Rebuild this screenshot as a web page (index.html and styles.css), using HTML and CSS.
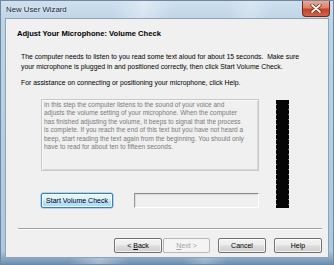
FILE: index.html
```html
<!DOCTYPE html>
<html>
<head>
<meta charset="utf-8">
<link rel="stylesheet" href="styles.css">
</head>
<body>
<div class="window">
  <div class="titlebar">
    <span class="title">New User Wizard</span>
    <span class="close"><svg width="12" height="9" viewBox="0 0 12 9"><path d="M2 1 L10 8 M10 1 L2 8" stroke="#6b2216" stroke-width="3.2" stroke-linecap="round"/><path d="M2 1 L10 8 M10 1 L2 8" stroke="#fff" stroke-width="1.7" stroke-linecap="round"/></svg></span>
  </div>
  <div class="client">
    <div class="heading">Adjust Your Microphone: Volume Check</div>
    <p class="para">The computer needs to listen to you read some text aloud for about 15 seconds.&nbsp; Make sure<br>your microphone is plugged in and positioned correctly, then click Start Volume Check.</p>
    <p class="para p2">For assistance on connecting or positioning your microphone, click Help.</p>
    <div class="meter-grid">
      <div class="readtext">In this step the computer listens to the sound of your voice and<br>adjusts the volume setting of your microphone. When the computer<br>has finished adjusting the volume, it beeps to signal that the process<br>is complete. If you reach the end of this text but you have not heard a<br>beep, start reading the text again from the beginning. You should only<br>have to read for about ten to fifteen seconds.</div>
      <div class="volbar"></div>
      <button class="btn btn-default start">Start Volume Check</button>
      <div class="progress"></div>
    </div>
    <div class="separator"></div>
    <div class="nav">
      <button class="btn nav-btn">&lt; <u>B</u>ack</button>
      <button class="btn nav-btn disabled"><u>N</u>ext &gt;</button>
      <button class="btn nav-btn gap">Cancel</button>
      <button class="btn nav-btn gap">Help</button>
    </div>
  </div>
</div>
</body>
</html>
```

FILE: styles.css
```css
html, body {
  margin: 0;
  padding: 0;
}
body {
  width: 334px;
  height: 265px;
  overflow: hidden;
  font-family: "Liberation Sans", Arial, sans-serif;
}
.window {
  box-sizing: border-box;
  width: 334px;
  height: 265px;
  display: flex;
  flex-direction: column;
  padding: 0 4px 6px 4px;
  background:
    linear-gradient(100deg, rgba(255,255,255,0) 30%, rgba(255,255,255,0.35) 38%, rgba(255,255,255,0) 46%, rgba(255,255,255,0) 60%, rgba(255,255,255,0.25) 66%, rgba(255,255,255,0) 72%),
    linear-gradient(180deg, #cfe0ee 0%, #bdd3e7 8%, #afc8df 95%, #6d8fb0 100%);
  border: 1px solid #6f879f;
}
.titlebar {
  height: 17px;
  display: flex;
  align-items: flex-start;
  justify-content: space-between;
  margin-right: -1px;
}
.title {
  font-size: 7.8px;
  color: #1b2533;
  margin-top: 4px;
  padding-left: 1px;
  text-shadow: 0 0 3px rgba(255,255,255,0.9);
}
.close {
  width: 28px;
  height: 16px;
  box-sizing: border-box;
  border: 1px solid #6e2a1e;
  border-top: none;
  border-radius: 0 0 4px 4px;
  background: linear-gradient(180deg, #e9a998 0%, #d9826c 45%, #c4452a 55%, #d0634a 100%);
  display: flex;
  align-items: center;
  justify-content: center;
}
.close svg { display: block; }
.client {
  flex: 1;
  background: #f0f0f0;
  border: 1px solid #8ea3b8;
  display: flex;
  flex-direction: column;
  padding: 10px 6px 0 11px;
  color: #000;
}
.heading {
  font-weight: bold;
  font-size: 7.6px;
  line-height: 10px;
  height: 10px;
  white-space: nowrap;
}
.para {
  margin: 13px 0 0 4px;
  font-size: 6.85px;
  line-height: 10px;
  white-space: nowrap;
}
.para.p2 {
  margin-top: 6px;
}
.meter-grid {
  margin: 11px 0 0 24px;
  display: grid;
  grid-template-columns: 72px 21px 125px 17px 13px;
  grid-template-rows: 72px 22px 15px;
}
.readtext {
  grid-column: 1 / 4;
  grid-row: 1;
  box-sizing: border-box;
  border: 1px solid #c8c8c8;
  box-shadow: 1px 1px 0 #fafafa inset, -1px -1px 0 #d6d6d6 inset;
  background: #f0f0f0;
  color: #7b7b7b;
  font-size: 6.5px;
  line-height: 8.4px;
  padding: 1px 0 0 2px;
  white-space: nowrap;
  overflow: hidden;
}
.volbar {
  grid-column: 5;
  grid-row: 1 / 4;
  margin-top: 1px;
  background:
    repeating-linear-gradient(180deg, transparent 0 4px, rgba(255,255,255,0.55) 4px 5px) left / 1px 100% no-repeat,
    repeating-linear-gradient(180deg, transparent 0 4px, rgba(255,255,255,0.45) 4px 5px) right / 1px 100% no-repeat,
    #050505;
}
.btn {
  box-sizing: border-box;
  font-family: "Liberation Sans", Arial, sans-serif;
  font-size: 7px;
  color: #000;
  border: 1px solid #707070;
  border-radius: 2px;
  background: linear-gradient(180deg, #f4f4f4 0%, #ebebeb 48%, #dddddd 52%, #cfcfcf 100%);
  box-shadow: inset 0 0 0 1px rgba(255,255,255,0.7);
  padding: 0;
  margin: 0;
  line-height: 12px;
}
.btn u { text-decoration: underline; }
.btn-default {
  border-color: #3c7fb1;
  background: linear-gradient(180deg, #eaf6fd 0%, #d9f0fc 48%, #bee6fd 52%, #a7d9f5 100%);
  box-shadow: inset 0 0 0 1px rgba(255,255,255,0.8), 0 0 0 0.5px #7fb6de;
}
.start {
  grid-column: 1;
  grid-row: 3;
  height: 15px;
  width: 72px;
}
.progress {
  grid-column: 3;
  grid-row: 3;
  box-sizing: border-box;
  border-top: 1px solid #8a8a8a;
  border-left: 1px solid #9a9a9a;
  border-right: 1px solid #ffffff;
  border-bottom: 1px solid #ffffff;
  box-shadow: inset 1px 1px 0 #dcdcdc;
  background: #f0f0f0;
}
.separator {
  margin: 20px 0 0 1px;
  height: 1px;
  background: #a0a0a0;
  border-bottom: 1px solid #ffffff;
}
.nav {
  margin-top: 8px;
  display: flex;
  justify-content: flex-end;
}
.nav-btn {
  width: 48px;
  height: 15px;
  margin-left: 1px;
}
.nav-btn.gap {
  margin-left: 8px;
}
.nav-btn.disabled {
  width: 47px;
  color: #a3a3a3;
  border-color: #b5b9bc;
  background: #f4f4f4;
  box-shadow: none;
}
```
